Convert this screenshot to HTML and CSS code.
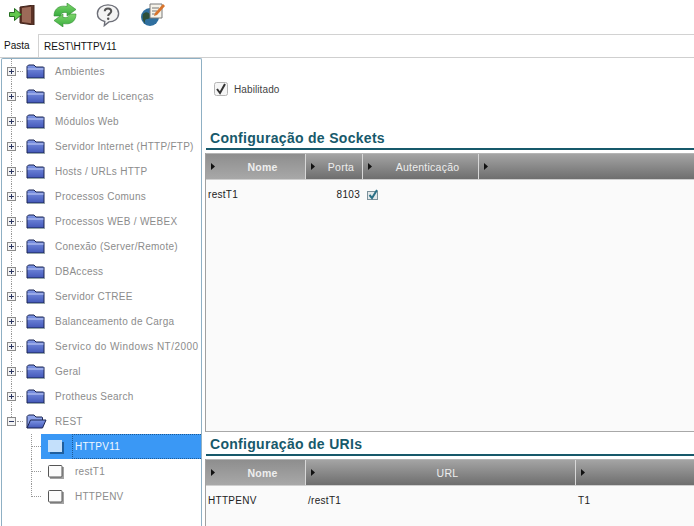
FILE: index.html
```html
<!DOCTYPE html>
<html lang="pt">
<head>
<meta charset="utf-8">
<title>Configuração</title>
<link rel="stylesheet" href="styles.css">
</head>
<body>
<svg class="defs" width="0" height="0" aria-hidden="true">
  <defs>
    <linearGradient id="fg" x1="0" y1="0" x2="0" y2="1"><stop offset="0" stop-color="#7f97e6"/><stop offset="1" stop-color="#4257b8"/></linearGradient>
    <linearGradient id="rf" x1="0" y1="0" x2="0" y2="1"><stop offset="0" stop-color="#7ed56a"/><stop offset="1" stop-color="#38ad3f"/></linearGradient>
    <symbol id="folder" viewBox="0 0 19 15"><path d="M1 14V2.500L2.500 1H8l2 2h7.500l.5.500V14z" fill="url(#fg)" stroke="#1b2450"/><path d="M1.500 5h16" stroke="#c4cff5"/><path d="M2 14.500h17" stroke="#9aa"/></symbol>
    <symbol id="folderopen" viewBox="0 0 21 15"><path d="M1 14V2.500L2.500 1H8l2 2h6l.5.500V6" fill="#8ea3ea" stroke="#1b2450"/><path d="M1 14L4.500 6H20l-3.500 8z" fill="url(#fg)" stroke="#1b2450"/></symbol>
    <symbol id="page" viewBox="0 0 16 14"><rect x="2" y="2" width="14" height="12" fill="#a3a3a3"/><rect x=".5" y=".5" width="13.500" height="11.500" rx="1" fill="currentColor" stroke="#555"/></symbol>
    <symbol id="pagesel" viewBox="0 0 16 14"><rect x="2" y="2" width="14" height="12" fill="#1f5f9e"/><rect x="0" y="0" width="14" height="12" fill="#c4e0fb"/></symbol>
    <symbol id="plus" viewBox="0 0 9 9"><rect x=".5" y=".5" width="8" height="8" fill="#f4f4f4" stroke="#8a8a8a"/><path d="M2 4.500h5M4.500 2v5" stroke="#2a3560"/></symbol>
    <symbol id="minus" viewBox="0 0 9 9"><rect x=".5" y=".5" width="8" height="8" fill="#f4f4f4" stroke="#8a8a8a"/><path d="M2 4.500h5" stroke="#2a3560"/></symbol>
    <symbol id="arrow" viewBox="0 0 4 7"><path d="M0 0l4 3.500L0 7z" fill="#111"/></symbol>
  </defs>
</svg>

<div class="toolbar">
  <svg class="tool t1" width="26" height="20" viewBox="0 0 26 20"><path d="M11 2l14-2v20l-14-2z" fill="#5c3226" stroke="#3f2219"/><path d="M13 3l9-1.300v16.600L13 17z" fill="#9c6a58"/><path d="M.5 7.500h5V3.500l7 6-7 6v-4h-5z" fill="#62c94c" stroke="#256f22"/></svg>
  <svg class="tool t2" width="24" height="24" viewBox="0 0 24 24"><path d="M1 13C1 5 7 2 14 3.500V0l9 6.500-9 6.500V9.500C10 9 8 10 7.500 13z" fill="url(#rf)" stroke="#2f8b2f" stroke-width=".6"/><path d="M23 11c0 8-6 11-13 9.500V24l-9-6.500L10 11v3.500c4 .5 6-.5 6.500-3.500z" fill="url(#rf)" stroke="#2f8b2f" stroke-width=".6"/></svg>
  <svg class="tool t3" width="24" height="24" viewBox="0 0 26 25"><path d="M13 1.500c6.500 0 11.500 4 11.500 9.500S19.500 20 14 20l-5 4 .5-4.500C5 18.500 1.500 15.500 1.500 11 1.500 5.500 6.500 1.500 13 1.500z" fill="#f4f4f4" stroke="#6d6f78" stroke-width="1.500"/><path d="M9.500 8.500C9.500 6.500 11 5.500 13 5.500s3.500 1.200 3.500 3c0 2.500-3.300 2.500-3.300 5" fill="none" stroke="#555" stroke-width="2.200"/><circle cx="13.200" cy="16.500" r="1.300" fill="#555"/></svg>
  <svg class="tool t4" width="25" height="24" viewBox="0 0 25 24"><circle cx="10" cy="14" r="9" fill="#2f6f9f"/><path d="M3 11c3-3 6-2 7 1s-1 4-3 4-3 3-1 5c-3-2-4-6-3-10z" fill="#2d4f3a"/><path d="M10 1h12v14H10z" fill="#f6f3ea" stroke="#7a7a7a"/><path d="M12 5h7M12 8h5M12 11h4" stroke="#777"/><path d="M23 1l2 2-8 9-3 1 1-3z" fill="#d8742c"/></svg>
</div>

<div class="pathbar">
  <span class="pathlabel">Pasta</span>
  <div class="pathvalue">REST\HTTPV11</div>
</div>

<div class="main">
  <nav class="tree">
    <div class="node"><svg class="exp"><use href="#plus"/></svg><svg class="folder"><use href="#folder"/></svg><span class="label">Ambientes</span></div>
    <div class="node"><svg class="exp"><use href="#plus"/></svg><svg class="folder"><use href="#folder"/></svg><span class="label">Servidor de Licenças</span></div>
    <div class="node"><svg class="exp"><use href="#plus"/></svg><svg class="folder"><use href="#folder"/></svg><span class="label">Módulos Web</span></div>
    <div class="node"><svg class="exp"><use href="#plus"/></svg><svg class="folder"><use href="#folder"/></svg><span class="label">Servidor Internet (HTTP/FTP)</span></div>
    <div class="node"><svg class="exp"><use href="#plus"/></svg><svg class="folder"><use href="#folder"/></svg><span class="label">Hosts / URLs HTTP</span></div>
    <div class="node"><svg class="exp"><use href="#plus"/></svg><svg class="folder"><use href="#folder"/></svg><span class="label">Processos Comuns</span></div>
    <div class="node"><svg class="exp"><use href="#plus"/></svg><svg class="folder"><use href="#folder"/></svg><span class="label">Processos WEB / WEBEX</span></div>
    <div class="node"><svg class="exp"><use href="#plus"/></svg><svg class="folder"><use href="#folder"/></svg><span class="label">Conexão (Server/Remote)</span></div>
    <div class="node"><svg class="exp"><use href="#plus"/></svg><svg class="folder"><use href="#folder"/></svg><span class="label">DBAccess</span></div>
    <div class="node"><svg class="exp"><use href="#plus"/></svg><svg class="folder"><use href="#folder"/></svg><span class="label">Servidor CTREE</span></div>
    <div class="node"><svg class="exp"><use href="#plus"/></svg><svg class="folder"><use href="#folder"/></svg><span class="label">Balanceamento de Carga</span></div>
    <div class="node"><svg class="exp"><use href="#plus"/></svg><svg class="folder"><use href="#folder"/></svg><span class="label wide">Servico do Windows NT/2000</span></div>
    <div class="node"><svg class="exp"><use href="#plus"/></svg><svg class="folder"><use href="#folder"/></svg><span class="label">Geral</span></div>
    <div class="node"><svg class="exp"><use href="#plus"/></svg><svg class="folder"><use href="#folder"/></svg><span class="label">Protheus Search</span></div>
    <div class="node"><svg class="exp"><use href="#minus"/></svg><svg class="folder open"><use href="#folderopen"/></svg><span class="label">REST</span></div>
    <div class="leaf selected"><svg class="page"><use href="#pagesel"/></svg><span class="label">HTTPV11</span></div>
    <div class="leaf"><svg class="page"><use href="#page"/></svg><span class="label">restT1</span></div>
    <div class="leaf last"><svg class="page"><use href="#page"/></svg><span class="label">HTTPENV</span></div>
  </nav>

  <section class="content">
    <label class="enable">
      <svg class="check" width="14" height="14" viewBox="0 0 14 14"><rect x=".5" y=".5" width="13" height="13" rx="2" fill="#f5f5f5" stroke="#b5b5b5"/><path d="M3 7l3 4 5-9" fill="none" stroke="#333" stroke-width="2"/></svg>
      <span>Habilitado</span>
    </label>

    <h2 class="heading first">Configuração de Sockets</h2>
    <div class="grid upper">
      <div class="head sockets">
        <div class="col sel"><svg class="arrow"><use href="#arrow"/></svg><span>Nome</span></div>
        <div class="col"><svg class="arrow"><use href="#arrow"/></svg><span>Porta</span></div>
        <div class="col"><svg class="arrow"><use href="#arrow"/></svg><span>Autenticação</span></div>
        <div class="col"><svg class="arrow"><use href="#arrow"/></svg></div>
      </div>
      <div class="row sockets">
        <div class="cell">restT1</div>
        <div class="cell num">8103</div>
        <div class="cell"><svg class="mini" width="12" height="11" viewBox="0 0 12 11"><rect x=".5" y="2.500" width="10" height="8" fill="#e2e8ea" stroke="#7d929c"/><path d="M2.500 6l2.500 3 5-8" fill="none" stroke="#2a6f86" stroke-width="2"/></svg></div>
        <div class="cell"></div>
      </div>
    </div>

    <h2 class="heading second">Configuração de URIs</h2>
    <div class="grid lower">
      <div class="head uris">
        <div class="col sel"><svg class="arrow"><use href="#arrow"/></svg><span>Nome</span></div>
        <div class="col"><svg class="arrow"><use href="#arrow"/></svg><span>URL</span></div>
        <div class="col"><svg class="arrow"><use href="#arrow"/></svg></div>
      </div>
      <div class="row uris">
        <div class="cell">HTTPENV</div>
        <div class="cell">/restT1</div>
        <div class="cell">T1</div>
      </div>
    </div>
  </section>
</div>
</body>
</html>
```

FILE: styles.css
```css
* { box-sizing: border-box; }
html, body { margin: 0; height: 100%; overflow: hidden; }
body {
  width: 694px;
  height: 526px;
  background: #fff;
  font-family: "Liberation Sans", Arial, sans-serif;
  font-size: 10px;
  color: #222;
  display: flex;
  flex-direction: column;
}
.defs { position: absolute; }

.toolbar {
  height: 34px;
  flex: none;
  display: flex;
  align-items: center;
  padding: 0 0 4px 9px;
}
.t1 { margin-right: 18px; }
.t2 { margin-right: 19px; }
.t3 { margin-right: 20px; }

.pathbar {
  height: 24px;
  flex: none;
  display: flex;
  align-items: center;
  border-bottom: 1px solid #cfcfcf;
}
.pathlabel { width: 38px; padding-left: 4px; color: #111; }
.pathvalue {
  flex: 1;
  align-self: stretch;
  display: flex;
  align-items: center;
  padding-left: 5px;
  background: #fff;
  border: 1px solid #d2d2d2;
  border-right: 0;
  border-bottom: 0;
  color: #111;
}

.main { flex: 1; min-height: 0; display: flex; }

.tree {
  width: 201px;
  flex: none;
  margin-left: 1px;
  background: #fff;
  border: 1px solid #8fb0c4;
  border-bottom: 0;
  border-radius: 2px 2px 0 0;
  position: relative;
}
.node, .leaf {
  height: 25px;
  display: flex;
  align-items: center;
  position: relative;
}
.node { padding-left: 5px; }
.node::before {
  content: "";
  position: absolute;
  left: 9px;
  top: 0;
  bottom: 0;
  border-left: 1px dotted #999;
}
.node:nth-child(15)::before { bottom: 13px; }
.node::after {
  content: "";
  position: absolute;
  left: 15px;
  top: 12px;
  width: 6px;
  border-top: 1px dotted #999;
}
.exp { width: 9px; height: 9px; margin-right: 10px; position: relative; z-index: 1; flex: none; }
.folder { width: 19px; height: 15px; margin-right: 10px; flex: none; }
.folder.open { width: 21px; margin-right: 8px; }
.label { color: #8c8c8c; white-space: nowrap; letter-spacing: .27px; }
.label.wide { letter-spacing: .45px; }

.leaf { margin-left: 39px; padding-left: 7px; }
.leaf::before {
  content: "";
  position: absolute;
  left: -10px;
  top: 0;
  bottom: 0;
  border-left: 1px dotted #999;
}
.leaf.last::before { bottom: 12px; }
.leaf::after {
  content: "";
  position: absolute;
  left: -10px;
  top: 12px;
  width: 10px;
  border-top: 1px dotted #999;
}
.page { width: 16px; height: 14px; margin-right: 11px; color: #fbfbfb; flex: none; }
.leaf.selected { background: #3a98f5; }
.leaf.selected .label {
  color: #f2f8ff;
  align-self: stretch;
  flex: 1;
  display: flex;
  align-items: center;
  margin-left: -3px;
  padding-left: 2px;
  border: 1px dotted #1d5a96;
  border-right: 0;
}

.content {
  flex: 1;
  min-width: 0;
  display: flex;
  flex-direction: column;
  padding: 0 0 0 3px;
  background: #fff;
}
.enable {
  height: 24px;
  margin: 19px 0 0 9px;
  display: flex;
  align-items: center;
  gap: 6px;
  color: #444;
  letter-spacing: .1px;
  flex: none;
}
.heading {
  margin: 0 0 0 1px;
  padding: 0 0 2px 4px;
  height: 22px;
  display: flex;
  align-items: flex-end;
  flex: none;
  font-size: 14px;
  font-weight: bold;
  letter-spacing: .3px;
  color: #17596b;
  border-bottom: 2px solid #17596b;
}
.heading.first { margin-top: 27px; }
.heading.second { margin-top: 2px; }

.grid {
  display: flex;
  flex-direction: column;
  background: #fafafa;
  border-left: 1px solid #a0a0a0;
  margin-top: 3px;
}
.grid.upper { height: 279px; border-bottom: 1px solid #a8a8a8; }
.grid.lower { flex: 1; min-height: 0; }

.head, .row { display: grid; }
.head { height: 27px; background: linear-gradient(#a4a4a4, #6c6c6c); border-top: 1px solid #b5b5b5; flex: none; }
.sockets { grid-template-columns: 100px 57px 116px 1fr; }
.uris { grid-template-columns: 100px 270px 1fr; }
.col {
  display: flex;
  align-items: center;
  position: relative;
  border-right: 1px solid #d8d8d8;
  border-bottom: 1px solid #cfcfcf;
  color: #eee;
  padding-left: 5px;
  font-size: 10.5px;
  letter-spacing: .25px;
}
.col:last-child { border-right: 0; }
.col span { flex: 1; text-align: center; padding-left: 5px; }
.col.sel { background: linear-gradient(#8e8e8e, #a8a8a8); font-weight: bold; }
.arrow { width: 4px; height: 7px; flex: none; }

.row { padding-top: 8px; color: #222; font-size: 10px; letter-spacing: .3px; }
.cell { padding: 0 2px; height: 14px; line-height: 14px; }
.cell.num { text-align: right; padding-right: 3px; }
.mini { margin: 1px 0 0 2px; }
```
